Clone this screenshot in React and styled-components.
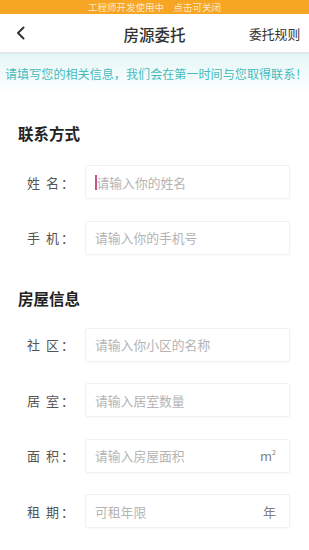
import React from "react";
import styled, { createGlobalStyle } from "styled-components";

const Global = createGlobalStyle`
  html, body { margin: 0; padding: 0; background: #fff; }
  body { font-family: "Noto Sans CJK SC", "Noto Sans", sans-serif; }
  * { box-sizing: border-box; }
`;

const Page = styled.div`
  width: 309px;
  height: 550px;
  overflow: hidden;
  background: #fff;
  display: flex;
  flex-direction: column;
`;

const DevBar = styled.div`
  height: 14px;
  background: #f6a623;
  color: rgba(255, 255, 255, 0.75);
  font-size: 9.5px;
  line-height: 14px;
  text-align: center;
  white-space: pre;
`;

const Header = styled.div`
  height: 39px;
  display: grid;
  grid-template-columns: 60px 1fr 60px;
  align-items: center;
  background: #fff;
  border-bottom: 1px solid #e3e3e3;
  box-shadow: 0 1px 2px rgba(0, 0, 0, 0.05);
  position: relative;
  z-index: 1;
`;

const Back = styled.div`
  padding-left: 16px;
  display: flex;
  align-items: center;
`;

const Title = styled.div`
  text-align: center;
  font-size: 15.5px;
  font-weight: 500;
  color: #333;
  padding-top: 1px;
`;

const Rules = styled.div`
  text-align: right;
  padding-right: 9px;
  font-size: 12.8px;
  color: #333;
  white-space: nowrap;
`;

const Notice = styled.div`
  height: 40px;
  padding-left: 5px;
  display: flex;
  align-items: center;
  background: linear-gradient(#e4f6f6, #ffffff);
  color: #45bcbc;
  font-size: 12.1px;
  white-space: nowrap;
`;

const Section = styled.section`
  padding-top: ${(p) => p.$top}px;
  display: flex;
  flex-direction: column;
`;

const SectionTitle = styled.h2`
  margin: 0 0 ${(p) => p.$gap}px 18px;
  height: 20px;
  line-height: 20px;
  font-size: 15.5px;
  font-weight: 700;
  color: #222;
`;

const Rows = styled.div`
  display: flex;
  flex-direction: column;
  gap: 21.5px;
`;

const Row = styled.div`
  display: flex;
  align-items: center;
  padding-left: 27px;
`;

const Label = styled.div`
  width: 58px;
  display: flex;
  align-items: center;
  font-size: 13px;
  color: #555;
  gap: 6px;
`;

const Colon = styled.span`
  margin-left: -4px;
`;

const Box = styled.div`
  width: 205px;
  height: 34px;
  border: 1px solid #f1f1f3;
  border-radius: 2px;
  box-shadow: 0 1px 2px rgba(0, 0, 0, 0.03);
  display: flex;
  align-items: center;
  padding: 0 13px 0 9px;
  background: #fff;
`;

const Placeholder = styled.span`
  flex: 1;
  font-size: 12.8px;
  color: #b4b4b4;
  display: flex;
  align-items: center;
`;

const Caret = styled.span`
  display: inline-block;
  width: 1.5px;
  height: 15px;
  background: #c2558a;
`;

const Unit = styled.span`
  font-size: 13px;
  color: #808080;
  sup {
    font-size: 7px;
    vertical-align: 6px;
  }
`;

function Field({ a, b, placeholder, unit, caret }) {
  return (
    <Row>
      <Label>
        <span>{a}</span>
        <span>{b}</span>
        <Colon>：</Colon>
      </Label>
      <Box>
        <Placeholder>
          {caret && <Caret />}
          {placeholder}
        </Placeholder>
        {unit && <Unit>{unit}</Unit>}
      </Box>
    </Row>
  );
}

export default function App() {
  return (
    <Page>
      <Global />
      <DevBar>工程师开发使用中　点击可关闭</DevBar>
      <Header>
        <Back>
          <svg width="10" height="14" viewBox="0 0 10 14">
            <polyline
              points="7.5,1.5 2,7 7.5,12.5"
              fill="none"
              stroke="#333"
              strokeWidth="2"
              strokeLinecap="round"
              strokeLinejoin="round"
            />
          </svg>
        </Back>
        <Title>房源委托</Title>
        <Rules>委托规则</Rules>
      </Header>
      <Notice>请填写您的相关信息，我们会在第一时间与您取得联系！</Notice>
      <Section $top={30}>
        <SectionTitle $gap={22}>联系方式</SectionTitle>
        <Rows>
          <Field a="姓" b="名" placeholder="请输入你的姓名" caret />
          <Field a="手" b="机" placeholder="请输入你的手机号" />
        </Rows>
      </Section>
      <Section $top={33}>
        <SectionTitle $gap={20}>房屋信息</SectionTitle>
        <Rows>
          <Field a="社" b="区" placeholder="请输入你小区的名称" />
          <Field a="居" b="室" placeholder="请输入居室数量" />
          <Field
            a="面"
            b="积"
            placeholder="请输入房屋面积"
            unit={
              <>
                m<sup>2</sup>
              </>
            }
          />
          <Field a="租" b="期" placeholder="可租年限" unit="年" />
        </Rows>
      </Section>
    </Page>
  );
}
